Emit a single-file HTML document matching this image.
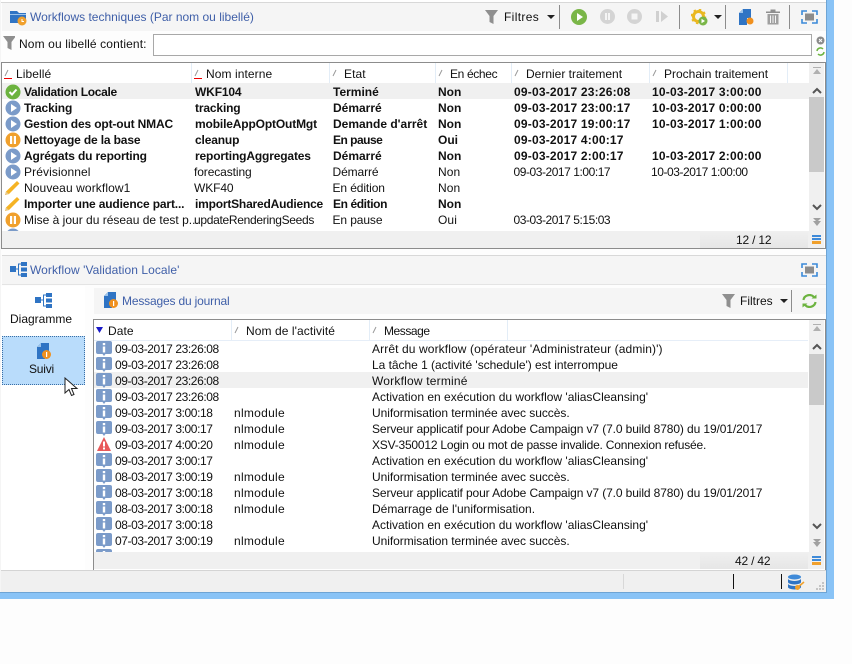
<!DOCTYPE html>
<html><head><meta charset="utf-8"><style>
html,body{margin:0;padding:0;background:#fdfdfd}
#p{position:relative;width:852px;height:664px;overflow:hidden;background:#fdfdfd;font:12px/16px "Liberation Sans",sans-serif;color:#111}
#p div,#p svg{position:absolute}
#p span{position:absolute;white-space:nowrap;top:0}
#log span{top:1px}
.t{white-space:nowrap}
.r{left:0;height:16px;width:100%}
.b{font-weight:bold}
.a{left:24px}.n{left:195px}.e{left:333px}.f{left:438px}.d{left:514px}.g{left:652px}
.b .a,.b .n{letter-spacing:-.15px}
.b .d,.b .g{letter-spacing:.2px}
.nb{letter-spacing:.1px}
.nb .n{left:194px;letter-spacing:-.1px}
.nb .e{left:332.500px;letter-spacing:-.1px}
.nb .d{left:513.500px;letter-spacing:-.45px}
.nb .g{left:651px;letter-spacing:-.45px}
.l{left:115px;letter-spacing:-.4px}.m{left:234px;letter-spacing:.28px}.o{left:372px}
.blue{color:#3f5fa8}
.sep{background:#e3edf7;width:1px;height:20px;top:0}
.tb{background:#8c8c8c;width:1px}
.h{letter-spacing:.08px}
</style></head><body><div id="p">
<svg width="0" height="0" style="position:absolute"><defs>
<g id="play"><circle cx="8" cy="8" r="7.5" fill="#7b9bc9"/><path d="M6 4l6 4-6 4z" fill="#fff"/></g>
<g id="pause"><circle cx="8" cy="8" r="7.5" fill="#f0a02c"/><rect x="5" y="4" width="2.2" height="8" fill="#fff"/><rect x="8.8" y="4" width="2.2" height="8" fill="#fff"/></g>
<g id="ok"><circle cx="8" cy="8" r="7.5" fill="#6cb33f"/><path d="M4.5 8l2.5 2.5 4.5-5" fill="none" stroke="#fff" stroke-width="2"/></g>
<g id="pen"><path d="M0 15l1-3.500L12 1l2.500 2.500L4 14z" fill="#f5b324"/><path d="M0 15l1-3.500L4 14z" fill="#e8c98a"/></g>
<g id="info"><path d="M0 2Q0 0 2 0H14Q16 0 16 2V11Q16 13 14 13H9.500L8 15 6.500 13H2Q0 13 0 11Z" fill="#7b9bc9"/><rect x="6.800" y="2" width="2.400" height="2.200" fill="#fff"/><rect x="6.800" y="5.500" width="2.400" height="6" fill="#fff"/></g>
<g id="sort"><path d="M2 8l3-6" stroke="#999" stroke-width="1" fill="none"/></g>
<g id="fs"><path d="M1 5V1h5M11 1h5v4M16 9v4h-5M6 13H1V9" fill="none" stroke="#3b8ad9" stroke-width="1.600"/><rect x="4" y="3.500" width="9" height="7" fill="#8c8c8c"/></g>
<g id="fun"><path d="M0 0h13L8.500 6v8l-4-2V6z" fill="#8f8f8f"/></g>
<g id="doc"><path d="M5 0h8v9H9v7H1V4z" fill="#2f74c4"/><path d="M1 4h4V0z" fill="#9cc3ea"/></g>
</defs></svg>

<!-- top toolbar -->
<div style="left:0;top:0;width:826px;height:2px;background:#fff"></div>
<div style="left:0;top:2px;width:826px;height:1px;background:#d8d8d8"></div>
<div style="left:2px;top:3px;width:824px;height:28px;background:#f5f5f5"></div>
<svg style="left:10px;top:9px" width="18" height="17"><path d="M0 2h7l2 2h7v10H0z" fill="#2f74c4"/><path d="M0 5h16v1H0z" fill="#9cc3ea"/><circle cx="12" cy="12" r="4.500" fill="#f0a02c"/><path d="M12 10v2.500h2" stroke="#fff" fill="none"/></svg>
<div class="t blue" style="left:30px;top:9px">Workflows techniques (Par nom ou libellé)</div>
<svg style="left:485px;top:10px" width="13" height="14"><use href="#fun"/></svg>
<div class="t" style="left:504px;top:9px;letter-spacing:.35px">Filtres</div>
<svg style="left:547px;top:15px" width="9" height="5"><path d="M0 0h8L4 4z" fill="#222"/></svg>
<div class="tb" style="left:559px;top:5px;height:24px"></div>
<svg style="left:571px;top:9px" width="16" height="16"><circle cx="8" cy="8" r="8" fill="#7ab648"/><path d="M6 4l6 4-6 4z" fill="#fff"/></svg>
<svg style="left:600px;top:9px" width="15" height="15"><circle cx="7.500" cy="7.500" r="7.500" fill="#d4d4d4"/><rect x="5" y="4" width="2" height="7" fill="#f5f5f5"/><rect x="8" y="4" width="2" height="7" fill="#f5f5f5"/></svg>
<svg style="left:627px;top:9px" width="15" height="15"><circle cx="7.500" cy="7.500" r="7.500" fill="#d4d4d4"/><rect x="4.500" y="4.500" width="6" height="6" fill="#f5f5f5"/></svg>
<svg style="left:656px;top:10px" width="13" height="13"><rect x="0" y="1" width="3" height="11" fill="#d0d0d0"/><path d="M5 1l7 5.500-7 5.500z" fill="#d0d0d0"/></svg>
<div class="tb" style="left:679px;top:5px;height:24px"></div>
<svg style="left:691px;top:9px" width="17" height="17"><circle cx="7.500" cy="7.500" r="5" fill="none" stroke="#eab821" stroke-width="3"/><circle cx="7.500" cy="7.500" r="7" fill="none" stroke="#eab821" stroke-width="1.500" stroke-dasharray="2.500 3"/><circle cx="12" cy="12" r="4.500" fill="#7ab648"/><path d="M10.500 9.800l3.500 2.200-3.500 2.200z" fill="#fff"/></svg>
<svg style="left:714px;top:15px" width="9" height="5"><path d="M0 0h8L4 4z" fill="#222"/></svg>
<div class="tb" style="left:725px;top:5px;height:24px"></div>
<svg style="left:738px;top:9px" width="16" height="17"><use href="#doc"/><circle cx="12" cy="12" r="3.500" fill="#f0901e"/></svg>
<svg style="left:766px;top:9px" width="14" height="16"><path d="M0 2.500h14v1.500H0zM4.500 2.500V.5h5v2" fill="#8f8f8f"/><path d="M1.500 5h11v10.500h-11z" fill="#a0a0a0"/><path d="M4.500 6.500v7.500M7 6.500v7.500M9.500 6.500v7.500" stroke="#f5f5f5"/></svg>
<div class="tb" style="left:789px;top:5px;height:24px"></div>
<svg style="left:801px;top:10px" width="17" height="14"><use href="#fs"/></svg>

<!-- filter row -->
<svg style="left:3px;top:36px" width="12" height="14"><use href="#fun"/></svg>
<div class="t" style="left:19px;top:36px;letter-spacing:.12px">Nom ou libellé contient:</div>
<div style="left:153px;top:34px;width:657px;height:20px;border:1px solid #a8a8a8;background:#fff"></div>
<svg style="left:816px;top:36px" width="9" height="9"><circle cx="4.500" cy="4.500" r="4" fill="#8a8a8a"/><path d="M3 3l3 3M6 3l-3 3" stroke="#fff"/></svg>
<svg style="left:816px;top:47px" width="9" height="9"><path d="M1 4a3.500 3.500 0 0 1 6-2M8 5a3.500 3.500 0 0 1-6 2" fill="none" stroke="#6cb33f" stroke-width="1.500"/></svg>

<!-- top table -->
<div style="left:1px;top:62px;width:823px;height:185px;border:1px solid #8c8c8c;background:#fff"></div>
<div style="left:2px;top:83px;width:807px;height:16px;background:#f0f0f0"></div>
<div style="left:2px;top:231px;width:822px;height:17px;background:#f0f0f0"></div>
<div style="left:700px;top:231px;width:108px;height:17px;background:linear-gradient(#f0f0f0,#e6e6e6)"></div>
<div class="t" style="left:736px;top:232px;letter-spacing:-.2px">12 / 12</div>
<div style="left:812px;top:235px;width:9px;height:2px;background:#3f8ad8"></div>
<div style="left:812px;top:238px;width:9px;height:2px;background:#3f8ad8"></div>
<div style="left:812px;top:241px;width:9px;height:3px;background:#f0a02c"></div>

<div class="sep" style="left:191px;top:63px"></div><div class="sep" style="left:329px;top:63px"></div><div class="sep" style="left:435px;top:63px"></div><div class="sep" style="left:511px;top:63px"></div><div class="sep" style="left:649px;top:63px"></div><div class="sep" style="left:787px;top:63px"></div>
<div style="left:4px;top:78px;width:8px;height:1px;background:#e00"></div>
<div style="left:194px;top:78px;width:8px;height:1px;background:#e00"></div>
<svg style="left:3px;top:68px" width="10" height="10"><use href="#sort"/></svg>
<svg style="left:193px;top:68px" width="10" height="10"><use href="#sort"/></svg>
<svg style="left:331px;top:68px" width="10" height="10"><use href="#sort"/></svg>
<svg style="left:437px;top:68px" width="10" height="10"><use href="#sort"/></svg>
<svg style="left:513px;top:68px" width="10" height="10"><use href="#sort"/></svg>
<svg style="left:651px;top:68px" width="10" height="10"><use href="#sort"/></svg>
<div class="t h" style="left:16px;top:66px">Libellé</div>
<div class="t h" style="left:206px;top:66px">Nom interne</div>
<div class="t h" style="left:344px;top:66px">Etat</div>
<div class="t" style="left:450px;top:66px;letter-spacing:-.35px">En échec</div>
<div class="t" style="left:526px;top:66px">Dernier traitement</div>
<div class="t" style="left:664px;top:66px">Prochain traitement</div>

<div style="left:0;top:83px;width:809px;height:148px;overflow:hidden">
<svg style="left:5px;top:1px" width="16" height="16"><use href="#ok"/></svg>
<svg style="left:5px;top:17px" width="16" height="16"><use href="#play"/></svg>
<svg style="left:5px;top:33px" width="16" height="16"><use href="#play"/></svg>
<svg style="left:5px;top:49px" width="16" height="16"><use href="#pause"/></svg>
<svg style="left:5px;top:65px" width="16" height="16"><use href="#play"/></svg>
<svg style="left:5px;top:81px" width="16" height="16"><use href="#play"/></svg>
<svg style="left:5px;top:97px" width="16" height="16"><use href="#pen"/></svg>
<svg style="left:5px;top:113px" width="16" height="16"><use href="#pen"/></svg>
<svg style="left:5px;top:129px" width="16" height="16"><use href="#pause"/></svg>
<svg style="left:5px;top:145px" width="16" height="16"><use href="#play"/></svg>
<div class="r b" style="top:1px"><span class="a" style="letter-spacing:-.3px">Validation Locale</span><span class="n">WKF104</span><span class="e">Terminé</span><span class="f">Non</span><span class="d">09-03-2017 23:26:08</span><span class="g">10-03-2017 3:00:00</span></div>
<div class="r b" style="top:17px"><span class="a">Tracking</span><span class="n">tracking</span><span class="e">Démarré</span><span class="f">Non</span><span class="d">09-03-2017 23:00:17</span><span class="g">10-03-2017 0:00:00</span></div>
<div class="r b" style="top:33px"><span class="a">Gestion des opt-out NMAC</span><span class="n">mobileAppOptOutMgt</span><span class="e">Demande d'arrêt</span><span class="f">Non</span><span class="d">09-03-2017 19:00:17</span><span class="g">10-03-2017 1:00:00</span></div>
<div class="r b" style="top:49px"><span class="a">Nettoyage de la base</span><span class="n">cleanup</span><span class="e" style="letter-spacing:-.5px">En pause</span><span class="f">Oui</span><span class="d">09-03-2017 4:00:17</span></div>
<div class="r b" style="top:65px"><span class="a">Agrégats du reporting</span><span class="n">reportingAggregates</span><span class="e">Démarré</span><span class="f">Non</span><span class="d">09-03-2017 2:00:17</span><span class="g">10-03-2017 2:00:00</span></div>
<div class="r nb" style="top:81px"><span class="a">Prévisionnel</span><span class="n">forecasting</span><span class="e">Démarré</span><span class="f">Non</span><span class="d">09-03-2017 1:00:17</span><span class="g">10-03-2017 1:00:00</span></div>
<div class="r nb" style="top:97px"><span class="a">Nouveau workflow1</span><span class="n">WKF40</span><span class="e">En édition</span><span class="f">Non</span></div>
<div class="r b" style="top:113px"><span class="a">Importer une audience part...</span><span class="n" style="letter-spacing:-.2px">importSharedAudience</span><span class="e" style="letter-spacing:-.4px">En édition</span><span class="f">Non</span></div>
<div class="r nb" style="top:129px"><span class="a" style="letter-spacing:0">Mise à jour du réseau de test p...</span><span class="n" style="letter-spacing:-.3px">updateRenderingSeeds</span><span class="e">En pause</span><span class="f">Oui</span><span class="d">03-03-2017 5:15:03</span></div>
</div>
<!-- scrollbar 1 -->
<div style="left:809px;top:63px;width:15px;height:168px;background:#f0f0f0"></div>
<div style="left:809px;top:97px;width:15px;height:75px;background:#c9c9c9"></div>
<svg style="left:812px;top:67px" width="10" height="8"><path d="M1 0h8v1H1zM5 2l4 5H1z" fill="#b0b0b0"/></svg>
<svg style="left:812px;top:87px" width="10" height="7"><path d="M1 6l4-4 4 4" fill="none" stroke="#555" stroke-width="2"/></svg>
<svg style="left:812px;top:204px" width="10" height="7"><path d="M1 1l4 4 4-4" fill="none" stroke="#555" stroke-width="2"/></svg>
<svg style="left:812px;top:218px" width="10" height="9"><path d="M1 0h8L5 4zM1 3h8L5 8z" fill="#a0a0a0"/></svg>

<!-- bottom title -->
<div style="left:2px;top:255px;width:824px;height:1px;background:#d8d8d8"></div>
<div style="left:2px;top:256px;width:824px;height:28px;background:#f5f5f5"></div>
<div style="left:2px;top:284px;width:824px;height:1px;background:#e4e4e4"></div>
<svg style="left:10px;top:262px" width="17" height="15"><rect x="0" y="4" width="6" height="6" fill="#2f74c4"/><rect x="11" y="0" width="6" height="4" fill="#2f74c4"/><rect x="11" y="5.500" width="6" height="4" fill="#2f74c4"/><rect x="11" y="11" width="6" height="4" fill="#2f74c4"/><path d="M6 7h2.500M11 2H8.500v11H11" fill="none" stroke="#2f74c4"/></svg>
<div class="t blue" style="left:30px;top:262px;letter-spacing:.07px">Workflow 'Validation Locale'</div>
<svg style="left:801px;top:263px" width="17" height="14"><use href="#fs"/></svg>

<!-- side -->
<div style="left:1px;top:286px;width:84px;height:284px;background:#fff"></div>
<svg style="left:35px;top:293px" width="17" height="15"><rect x="0" y="4" width="6" height="6" fill="#2f74c4"/><rect x="11" y="0" width="6" height="4" fill="#2f74c4"/><rect x="11" y="5.500" width="6" height="4" fill="#2f74c4"/><rect x="11" y="11" width="6" height="4" fill="#2f74c4"/><path d="M6 7h2.500M11 2H8.500v11H11" fill="none" stroke="#2f74c4"/></svg>
<div class="t" style="left:10px;top:311px">Diagramme</div>
<div style="left:2px;top:336px;width:81px;height:47px;background:#b9dcfb;border:1px dotted #3a6ea5"></div>
<svg style="left:36px;top:343px" width="16" height="17"><use href="#doc"/><circle cx="10.500" cy="11.500" r="4.500" fill="#f0901e"/><rect x="10" y="9" width="1.200" height="5" fill="#fff"/></svg>
<div class="t" style="left:29px;top:361px;letter-spacing:-.2px">Suivi</div>
<svg style="left:64px;top:377px" width="15" height="21"><path d="M1 1v15l4-3.500 2.500 6 2.500-1-2.500-6H13z" fill="#fff" stroke="#222"/></svg>

<!-- bottom toolbar -->
<div style="left:94px;top:288px;width:732px;height:26px;background:#f5f5f5"></div>
<svg style="left:103px;top:292px" width="16" height="17"><use href="#doc"/><circle cx="10.500" cy="11.500" r="4.500" fill="#f0901e"/><rect x="10" y="9" width="1.200" height="5" fill="#fff"/></svg>
<div class="t blue" style="left:122px;top:293px;letter-spacing:-.17px">Messages du journal</div>
<svg style="left:722px;top:294px" width="13" height="14"><use href="#fun"/></svg>
<div class="t" style="left:740px;top:293px">Filtres</div>
<svg style="left:780px;top:299px" width="9" height="5"><path d="M0 0h8L4 4z" fill="#222"/></svg>
<div class="tb" style="left:791px;top:290px;height:22px"></div>
<svg style="left:802px;top:294px" width="15" height="14"><path d="M1.500 6a6 5.500 0 0 1 10.500-3M13.500 8a6 5.500 0 0 1-10.500 3" fill="none" stroke="#6cb33f" stroke-width="2.200"/><path d="M9.500 4.500h5v-4zM5.500 9.500h-5v4z" fill="#6cb33f"/></svg>

<!-- bottom table -->
<div style="left:93px;top:319px;width:731px;height:250px;border:1px solid #8c8c8c;background:#fff"></div>
<div class="sep" style="left:231px;top:320px"></div><div class="sep" style="left:369px;top:320px"></div><div class="sep" style="left:507px;top:320px"></div>
<div style="left:94px;top:340px;width:714px;height:1px;background:#e6eef8"></div>
<svg style="left:96px;top:327px" width="8" height="7"><path d="M0 0h7L3.500 6z" fill="#1a1ac8"/></svg>
<svg style="left:233px;top:325px" width="10" height="10"><use href="#sort"/></svg>
<svg style="left:371px;top:325px" width="10" height="10"><use href="#sort"/></svg>
<div class="t h" style="left:108px;top:323px">Date</div>
<div class="t h" style="left:246px;top:323px">Nom de l'activité</div>
<div class="t" style="left:384px;top:323px;letter-spacing:-.45px">Message</div>
<div style="left:94px;top:372px;width:714px;height:16px;background:#f0f0f0"></div>
<div style="left:94px;top:552px;width:730px;height:17px;background:#f0f0f0"></div>
<div style="left:700px;top:552px;width:108px;height:17px;background:linear-gradient(#f0f0f0,#e6e6e6)"></div>
<div class="t" style="left:735px;top:553px;letter-spacing:-.2px">42 / 42</div>
<div style="left:812px;top:556px;width:9px;height:2px;background:#3f8ad8"></div>
<div style="left:812px;top:559px;width:9px;height:2px;background:#3f8ad8"></div>
<div style="left:812px;top:562px;width:9px;height:3px;background:#f0a02c"></div>
<div id="log" style="left:0;top:340px;width:808px;height:212px;overflow:hidden">
<svg style="left:96px;top:1px" width="16" height="16"><use href="#info"/></svg>
<svg style="left:96px;top:17px" width="16" height="16"><use href="#info"/></svg>
<svg style="left:96px;top:33px" width="16" height="16"><use href="#info"/></svg>
<svg style="left:96px;top:49px" width="16" height="16"><use href="#info"/></svg>
<svg style="left:96px;top:65px" width="16" height="16"><use href="#info"/></svg>
<svg style="left:96px;top:81px" width="16" height="16"><use href="#info"/></svg>
<svg style="left:97px;top:97px" width="14" height="14"><path d="M7 0l7 14H0z" fill="#e8595a"/><rect x="6" y="4.500" width="2" height="5" fill="#fff"/><rect x="6" y="10.500" width="2" height="2" fill="#fff"/></svg>
<svg style="left:96px;top:113px" width="16" height="16"><use href="#info"/></svg>
<svg style="left:96px;top:129px" width="16" height="16"><use href="#info"/></svg>
<svg style="left:96px;top:145px" width="16" height="16"><use href="#info"/></svg>
<svg style="left:96px;top:161px" width="16" height="16"><use href="#info"/></svg>
<svg style="left:96px;top:177px" width="16" height="16"><use href="#info"/></svg>
<svg style="left:96px;top:193px" width="16" height="16"><use href="#info"/></svg>
<svg style="left:96px;top:209px" width="16" height="16"><use href="#info"/></svg>
<div class="r" style="top:0"><span class="l">09-03-2017 23:26:08</span><span class="o" style="letter-spacing:.11px">Arrêt du workflow (opérateur 'Administrateur (admin)')</span></div>
<div class="r" style="top:16px"><span class="l">09-03-2017 23:26:08</span><span class="o" style="letter-spacing:-.03px">La tâche 1 (activité 'schedule') est interrompue</span></div>
<div class="r" style="top:32px"><span class="l">09-03-2017 23:26:08</span><span class="o" style="letter-spacing:.2px">Workflow terminé</span></div>
<div class="r" style="top:48px"><span class="l">09-03-2017 23:26:08</span><span class="o">Activation en exécution du workflow 'aliasCleansing'</span></div>
<div class="r" style="top:64px"><span class="l">09-03-2017 3:00:18</span><span class="m">nlmodule</span><span class="o" style="letter-spacing:-.05px">Uniformisation terminée avec succès.</span></div>
<div class="r" style="top:80px"><span class="l">09-03-2017 3:00:17</span><span class="m">nlmodule</span><span class="o" style="letter-spacing:-.11px">Serveur applicatif pour Adobe Campaign v7 (7.0 build 8780) du 19/01/2017</span></div>
<div class="r" style="top:96px"><span class="l">09-03-2017 4:00:20</span><span class="m">nlmodule</span><span class="o" style="letter-spacing:-.21px">XSV-350012 Login ou mot de passe invalide. Connexion refusée.</span></div>
<div class="r" style="top:112px"><span class="l">09-03-2017 3:00:17</span><span class="o">Activation en exécution du workflow 'aliasCleansing'</span></div>
<div class="r" style="top:128px"><span class="l">08-03-2017 3:00:19</span><span class="m">nlmodule</span><span class="o" style="letter-spacing:-.05px">Uniformisation terminée avec succès.</span></div>
<div class="r" style="top:144px"><span class="l">08-03-2017 3:00:18</span><span class="m">nlmodule</span><span class="o" style="letter-spacing:-.11px">Serveur applicatif pour Adobe Campaign v7 (7.0 build 8780) du 19/01/2017</span></div>
<div class="r" style="top:160px"><span class="l">08-03-2017 3:00:18</span><span class="m">nlmodule</span><span class="o">Démarrage de l'uniformisation.</span></div>
<div class="r" style="top:176px"><span class="l">08-03-2017 3:00:18</span><span class="o">Activation en exécution du workflow 'aliasCleansing'</span></div>
<div class="r" style="top:192px"><span class="l">07-03-2017 3:00:19</span><span class="m">nlmodule</span><span class="o" style="letter-spacing:-.05px">Uniformisation terminée avec succès.</span></div>
</div>
<!-- scrollbar 2 -->
<div style="left:809px;top:320px;width:15px;height:232px;background:#f0f0f0"></div>
<div style="left:809px;top:354px;width:15px;height:51px;background:#c9c9c9"></div>
<svg style="left:812px;top:324px" width="10" height="8"><path d="M1 0h8v1H1zM5 2l4 5H1z" fill="#b0b0b0"/></svg>
<svg style="left:812px;top:343px" width="10" height="7"><path d="M1 6l4-4 4 4" fill="none" stroke="#555" stroke-width="2"/></svg>
<svg style="left:812px;top:523px" width="10" height="7"><path d="M1 1l4 4 4-4" fill="none" stroke="#555" stroke-width="2"/></svg>
<svg style="left:812px;top:539px" width="10" height="9"><path d="M1 0h8L5 4zM1 3h8L5 8z" fill="#a0a0a0"/></svg>

<!-- status bar -->
<div style="left:0;top:571px;width:826px;height:21px;background:#f0f0f0"></div>
<div style="left:0;top:570px;width:826px;height:1px;background:#d4d4d4"></div>
<div style="left:623px;top:574px;width:1px;height:15px;background:#d8d8d8"></div>
<div style="left:733px;top:574px;width:1px;height:15px;background:#111"></div>
<div style="left:781px;top:574px;width:1px;height:15px;background:#111"></div>
<svg style="left:788px;top:574px" width="17" height="17"><ellipse cx="6.500" cy="3" rx="6.500" ry="2.500" fill="#3f8ad8"/><path d="M0 4.500a6.500 2.500 0 0 0 13 0V8a6.500 2.500 0 0 1-13 0zM0 9.500a6.500 2.500 0 0 0 13 0V13a6.500 2.500 0 0 1-13 0z" fill="#2f74c4"/><path d="M9 14l7-6" stroke="#f0a02c" stroke-width="1.600"/><circle cx="9.500" cy="13.500" r="2.500" fill="#f0a02c"/></svg>
<svg style="left:816px;top:582px" width="9" height="9"><path d="M6 0h2v2H6zM3 3h2v2H3zM6 3h2v2H6zM0 6h2v2H0zM3 6h2v2H3zM6 6h2v2H6z" fill="#c4c4c4"/></svg>

<!-- window frame -->
<div style="left:826px;top:0;width:8px;height:599px;background:#89c3f6"></div>
<div style="left:826px;top:0;width:1px;height:592px;background:#6ea4d4"></div>
<div style="left:0;top:592px;width:834px;height:7px;background:#89c3f6"></div>
<div style="left:0;top:592px;width:827px;height:1px;background:#6ea4d4"></div>
<div style="left:0;top:0;width:1px;height:592px;background:#f5f5f5"></div>
</div></body></html>
